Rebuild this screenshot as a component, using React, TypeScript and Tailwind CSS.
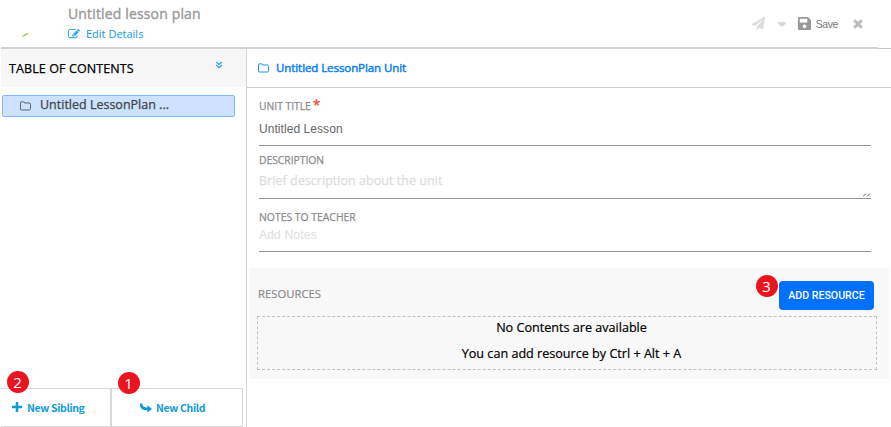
import React from "react";
import { FaPaperPlane, FaCaretDown, FaSave } from "react-icons/fa";

const OPEN = "font-['Open_Sans','Noto_Sans',sans-serif]";
const SOURCE = "font-['Noto_Sans_CJK_SC','Noto_Sans',sans-serif]";
const ARIAL = "font-['Liberation_Sans',Arial,sans-serif]";
const MEDIUM = "[-webkit-text-stroke:0.25px_currentColor]";

function Folder({ className = "" }: { className?: string }) {
  return (
    <svg viewBox="0 0 11 10" className={`h-[10px] w-[11px] shrink-0 ${className}`} fill="none" stroke="currentColor" strokeWidth=".9">
      <path d="M.5 8V2Q.5 .8 1.6 .8H3.5Q4.4 .8 4.5 2H9.3Q10.5 2 10.5 3.2V7.8Q10.5 9 9.3 9H1.6Q.5 9 .5 8Z" />
    </svg>
  );
}

function EditIcon() {
  return (
    <svg viewBox="0 0 1792 1536" className="h-[10px] w-[12px] shrink-0" fill="currentColor">
      <path d="M888 1056l116-116-152-152-116 116v56h96v96h56zm440-720q-16-16-33 1L945 687q-17 17-1 33t33-1l350-350q17-17 1-33zm80 594v190q0 119-84.500 203.500T1120 1408H288q-119 0-203.500-84.500T0 1120V288q0-119 84.500-203.500T288 0h832q63 0 117 25 15 7 18 23 3 17-9 29l-49 49q-14 14-32 8-23-6-45-6H288q-66 0-113 47t-47 113v832q0 66 47 113t113 47h832q66 0 113-47t47-113V994q0-13 9-22l64-64q15-15 35-7t20 29zm-96-738l288 288-672 672H640V864zm444 132l-92 92-288-288 92-92q28-28 68-28t68 28l152 152q28 28 28 68t-28 68z" />
    </svg>
  );
}

function Badge({ n, className }: { n: string; className: string }) {
  return (
    <span className={`absolute flex size-[22px] items-center justify-center rounded-full bg-[#ea1420] text-[15px] leading-none text-white ${OPEN} ${className}`}>
      {n}
    </span>
  );
}

export default function App() {
  return (
    <div className={`flex h-[427px] w-[891px] flex-col overflow-hidden bg-white ${OPEN}`}>
      <header className="flex h-[47px] shrink-0 justify-between">
        <div className="flex">
          <svg viewBox="0 0 10 6" className="mt-[33px] ml-[21px] h-[5px] w-[9px]">
            <path d="M0 5Q3 1 9 0Q7 3 0 5Z" fill="#8ccb4b" />
          </svg>
          <div className="ml-[38px] flex flex-col">
            <h1 className="mt-[4px] text-[14px] leading-[20px] tracking-[0.150px] whitespace-nowrap text-[#999] [-webkit-text-stroke:0.350px_currentColor]">Untitled lesson plan</h1>
            <a className="mt-[2px] flex h-[16px] items-center text-[11px] text-[#109bd7]">
              <EditIcon />
              <span className="ml-[6px] whitespace-nowrap">Edit Details</span>
            </a>
          </div>
        </div>
        <div className="flex h-[47px] items-center pr-[27px]">
          <FaPaperPlane className="size-[13px] text-[#ddd]" />
          <FaCaretDown className="ml-[10px] size-[14px] text-[#d5d5d5]" />
          <FaSave className="ml-[8px] size-[15px] text-[#999]" />
          <span className={`mt-[2px] ml-[4px] text-[10.500px] tracking-[-0.400px] text-[#777] ${ARIAL}`}>Save</span>
          <svg viewBox="0 0 10 10" className="mr-px ml-[15px] size-[10px]" fill="none" stroke="#bbb" strokeWidth="3">
            <path d="M1.200 1.200L8.800 8.800M8.800 1.200L1.200 8.800" />
          </svg>
        </div>
      </header>
      <div className="flex h-[2px] shrink-0 pl-px">
        <div className="w-[877px] bg-[#d3d3d3]" />
        <div className="mt-px h-px flex-1 bg-[#c8c8c8]" />
      </div>

      <div className="flex min-h-0 flex-1">
        <aside className="flex w-[246px] shrink-0 flex-col pl-px">
          <div className="flex h-[38px] shrink-0 justify-between bg-[#f7f7f7] pr-[23px] pl-[8px]">
            <h2 className={`text-[12.500px] leading-[39px] tracking-[0.100px] whitespace-nowrap text-black ${MEDIUM}`}>TABLE OF CONTENTS</h2>
            <svg viewBox="0 0 8 8" className="mt-[12px] size-[8px]" fill="none" stroke="#3293ff" strokeWidth="1.100">
              <path d="M1 .8L4 3.500L7 .8M1 4L4 6.700L7 4" />
            </svg>
          </div>
          <div className="mt-[8px] ml-px flex h-[22px] w-[233px] shrink-0 items-center rounded-[2px] border border-[#80b9f8] bg-[#cce2ff] pl-[17px] text-[#444]">
            <Folder className="-mt-px text-[#555]" />
            <span className={`-mt-[2px] ml-[9px] text-[12.500px] leading-[20px] whitespace-nowrap ${MEDIUM}`}>Untitled LessonPlan ...</span>
          </div>
          <div className={`relative mt-auto flex h-[39px] w-[242px] border-y border-r border-[#d8d8d8] text-[10.500px] font-bold tracking-[-0.350px] text-[#109bd7] ${SOURCE}`}>
            <Badge n="2" className="top-[-18px] left-[5.500px] font-normal tracking-normal" />
            <Badge n="1" className="top-[-17px] left-[116.500px] font-normal tracking-normal" />
            <button className="flex w-[111px] items-center border-r-2 border-[#d8d8d8] pl-[11px]">
              <svg viewBox="0 0 10 10" className="-mt-[2px] size-[10px]" fill="none" stroke="currentColor" strokeWidth="2.500">
                <path d="M5 0V10M0 5H10" />
              </svg>
              <span className="ml-[5px] whitespace-nowrap">New Sibling</span>
            </button>
            <button className="flex flex-1 items-center pl-[28px]">
              <svg viewBox="0 0 13 10" className="h-[10px] w-[12px]" fill="currentColor">
                <path d="M0 0H2.500C2.300 3 4 4.500 8 4.500V2L13 6L8 10V7.500C2 7.500-.5 5 0 0Z" />
              </svg>
              <span className="ml-[4px] whitespace-nowrap">New Child</span>
            </button>
          </div>
        </aside>

        <main className="flex min-w-0 flex-1 flex-col border-l border-[#d5d5d5]">
          <div className="flex h-[39px] shrink-0 items-center border-b border-[#ccc] pl-[11px] text-[#087cf5]">
            <Folder />
            <span className="ml-[7px] text-[11.500px] tracking-[-0.080px] whitespace-nowrap [-webkit-text-stroke:0.450px_currentColor]">Untitled LessonPlan Unit</span>
          </div>
          <section className="mr-[20px] ml-[12px] flex shrink-0 flex-col">
            <div className="flex h-[58px] flex-col border-b border-[#949494]">
              <label className={`mt-[10px] h-[17px] text-[10.300px] leading-[17px] whitespace-nowrap text-[#8c8c8c] ${MEDIUM}`}>
                UNIT TITLE<span className="ml-[2px] text-[14px] leading-[10px] text-[#f44336]">*</span>
              </label>
              <span className={`mt-[6px] text-[12px] leading-[16px] tracking-[0.060px] whitespace-nowrap text-[#666] ${ARIAL}`}>Untitled Lesson</span>
            </div>
            <div className="relative flex h-[53px] flex-col border-b border-[#949494]">
              <label className={`mt-[6px] text-[10.300px] leading-[16px] whitespace-nowrap text-[#8c8c8c] ${MEDIUM}`}>DESCRIPTION</label>
              <span className={`mt-[5px] text-[12.500px] leading-[16px] tracking-[0.040px] whitespace-nowrap text-[#ddd] ${MEDIUM}`}>Brief description about the unit</span>
              <svg viewBox="0 0 8 4" className="absolute right-0 bottom-[1px] h-[4px] w-[8px]" stroke="#444" strokeWidth=".9">
                <path d="M0 3.500L3 .5M4 3.500L7 .5" />
              </svg>
            </div>
            <div className="flex h-[53px] flex-col border-b border-[#949494]">
              <label className={`mt-[10px] text-[10.400px] leading-[16px] whitespace-nowrap text-[#8c8c8c] ${MEDIUM}`}>NOTES TO TEACHER</label>
              <span className={`mt-[2px] text-[12px] leading-[16px] tracking-[0.200px] whitespace-nowrap text-[#ddd] ${ARIAL}`}>Add Notes</span>
            </div>
          </section>
          <section className="mt-[16px] mr-[2px] ml-[2px] flex h-[111px] shrink-0 flex-col bg-[#f8f8f8] pr-[12px] pl-[8px]">
            <div className="flex h-[48px] justify-between pr-[3px] pl-px">
              <h3 className="mt-[18px] text-[11.300px] leading-[16px] whitespace-nowrap text-[#8c8c8c] [-webkit-text-stroke:0.200px_currentColor]">RESOURCES</h3>
              <div className="relative mt-[13px] h-[29px]">
                <Badge n="3" className="top-[-6px] left-[-23.500px]" />
                <button className="block h-[29px] w-[95px] rounded-[4px] bg-[#0070ff] font-['Roboto',sans-serif] text-[10.600px] font-medium whitespace-nowrap text-white">ADD RESOURCE</button>
              </div>
            </div>
            <div className="flex h-[54px] flex-col items-center border border-dashed border-[#c2c2c2] pl-[9px] text-[12.600px] leading-[16px] text-black [-webkit-text-stroke:0.200px_currentColor]">
              <p className="mt-[3px] whitespace-nowrap">No Contents are available</p>
              <p className="mt-[10px] whitespace-nowrap">You can add resource by Ctrl + Alt + A</p>
            </div>
          </section>
        </main>
      </div>
    </div>
  );
}
